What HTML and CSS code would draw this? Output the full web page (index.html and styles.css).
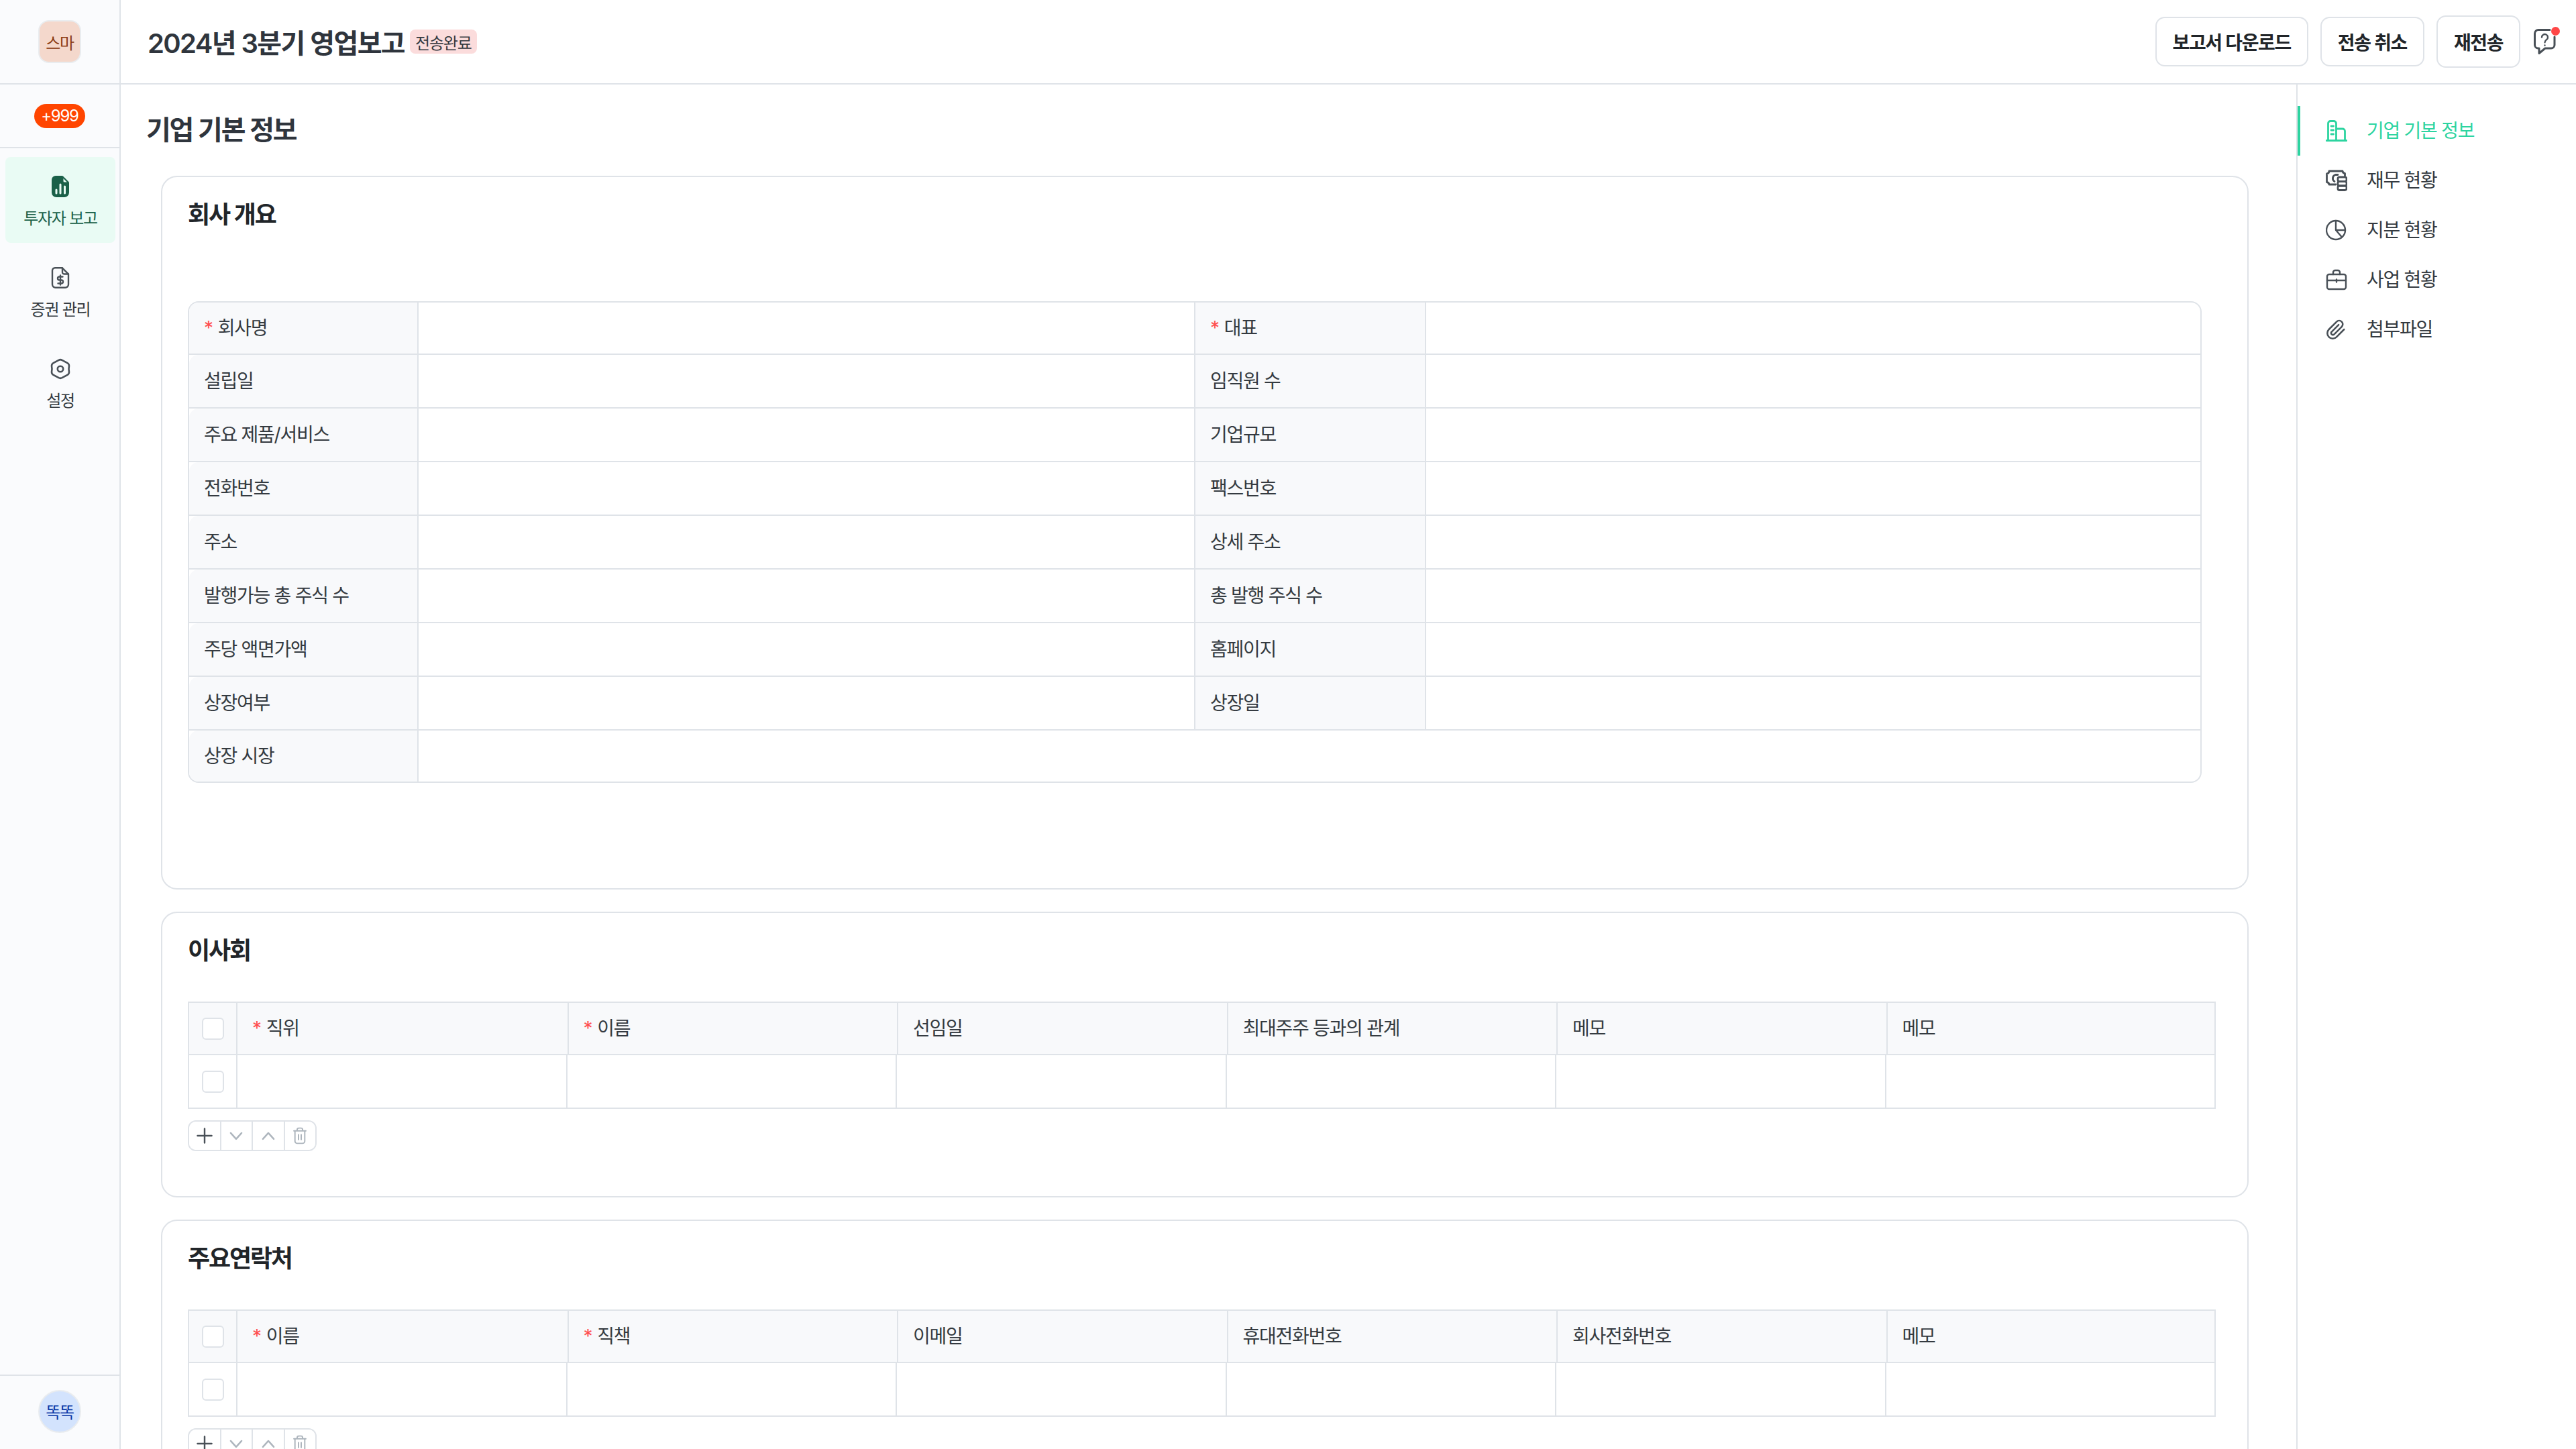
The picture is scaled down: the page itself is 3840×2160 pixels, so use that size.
FILE: index.html
```html
<!DOCTYPE html>
<html lang="ko">
<head>
    <meta charset="UTF-8">
    <meta name="viewport" content="width=device-width, initial-scale=1.0">
    <title>2024년 3분기 영업보고</title>
    <link rel="stylesheet" href="styles.css">
</head>
<body>

<aside class="sidebar">
    <div class="side-logo"><span class="company">스마</span></div>
    <div class="side-count"><span class="count">+999</span></div>
    <nav class="side-nav">
        <a class="side-item active">
            <svg class="icon" viewBox="0 0 32 32"><path fill="#1a6048" d="M9 0h9.500a2 2 0 0 1 1.400.6l8.500 8.500a2 2 0 0 1 .6 1.400V25a7 7 0 0 1-7 7H10a7 7 0 0 1-7-7V6a6 6 0 0 1 6-6z"/><path fill="#e9fbf4" d="M20.500 4v4a1.500 1.500 0 0 0 1.500 1.500h3.800z"/><path fill="none" stroke="#e9fbf4" stroke-width="3" stroke-linecap="round" d="M10 26v-5M16 26V13M22.500 26V16"/></svg>
            <span>투자자 보고</span>
        </a>
        <a class="side-item">
            <svg class="icon" viewBox="0 0 32 32" fill="none" stroke="#495057" stroke-width="2.400" stroke-linecap="round" stroke-linejoin="round"><path d="M8 1.200h10.500L28 10.700V26a4.800 4.800 0 0 1-4.800 4.800H8.800A4.800 4.800 0 0 1 4 26V5.200a4 4 0 0 1 4-4z"/><path d="M19 1.500V8a2.500 2.500 0 0 0 2.500 2.500H28"/><path d="M19.500 14.500h-5a2.500 2.500 0 0 0 0 5h3a2.500 2.500 0 0 1 0 5h-5M16 12.500v14"/></svg>
            <span>증권 관리</span>
        </a>
        <a class="side-item">
            <svg class="icon" viewBox="0 0 32 32" fill="none" stroke="#495057" stroke-width="2.600" stroke-linejoin="round"><path d="M13.500 2.800Q16 1.500 18.500 2.800L26.500 7.200Q29 8.500 29 11.500Q28 16 29 20.500Q29 23.500 26.500 24.800L18.500 29.200Q16 30.500 13.500 29.200L5.500 24.800Q3 23.500 3 20.500Q4 16 3 11.500Q3 8.500 5.500 7.200Z"/><circle cx="16" cy="16" r="4.200"/></svg>
            <span>설정</span>
        </a>
    </nav>
    <div class="side-foot"><span class="user">똑똑</span></div>
</aside>

<div class="page">
    <header class="topbar">
        <h1>2024년 3분기 영업보고</h1>
        <span class="tag">전송완료</span>
        <div class="actions">
            <button class="btn">보고서 다운로드</button>
            <button class="btn">전송 취소</button>
            <button class="btn btn-hover">재전송</button>
            <span class="help">
                <svg viewBox="0 0 38 40" fill="none" stroke="#495057" stroke-width="3" stroke-linejoin="round" stroke-linecap="round"><path d="M24 2.500H7A5.500 5.500 0 0 0 1.500 8v17a5 5 0 0 0 5 5H8v7.500l9-7.500h9a5 5 0 0 0 5-5V13"/><path stroke-width="2.400" d="M12 13.500a4.500 4.500 0 1 1 7.200 3.600c-1.700 1.200-2.700 2.200-2.700 4.200M16.500 25.500v.3"/></svg>
                <i class="dot"></i>
            </span>
        </div>
    </header>

    <div class="body">
        <main class="content">
            <h2 class="page-title">기업 기본 정보</h2>

            <section class="card card-info">
                <h3>회사 개요</h3>
                <table class="info">
                    <colgroup><col class="c-label"><col class="c-value"><col class="c-label2"><col></colgroup>
                    <tr><th><em>*</em>회사명</th><td></td><th><em>*</em>대표</th><td></td></tr>
                    <tr><th>설립일</th><td></td><th>임직원 수</th><td></td></tr>
                    <tr><th>주요 제품/서비스</th><td></td><th>기업규모</th><td></td></tr>
                    <tr><th>전화번호</th><td></td><th>팩스번호</th><td></td></tr>
                    <tr><th>주소</th><td></td><th>상세 주소</th><td></td></tr>
                    <tr><th>발행가능 총 주식 수</th><td></td><th>총 발행 주식 수</th><td></td></tr>
                    <tr><th>주당 액면가액</th><td></td><th>홈페이지</th><td></td></tr>
                    <tr><th>상장여부</th><td></td><th>상장일</th><td></td></tr>
                    <tr><th>상장 시장</th><td colspan="3"></td></tr>
                </table>
            </section>

            <section class="card">
                <h3>이사회</h3>
                <table class="grid">
                    <colgroup><col class="c-check"><col span="6"></colgroup>
                    <tr>
                        <th><span class="check"></span></th>
                        <th><em>*</em>직위</th>
                        <th><em>*</em>이름</th>
                        <th>선임일</th>
                        <th>최대주주 등과의 관계</th>
                        <th>메모</th>
                        <th>메모</th>
                    </tr>
                    <tr>
                        <td><span class="check"></span></td>
                        <td></td><td></td><td></td><td></td><td></td><td></td>
                    </tr>
                </table>
                <div class="tools">
                    <button><svg viewBox="0 0 32 32"><path stroke="#495057" stroke-width="3" stroke-linecap="round" d="M16 3v26M3 16h26"/></svg></button>
                    <button><svg viewBox="0 0 32 32"><path fill="none" stroke="#adb5bd" stroke-width="3" stroke-linecap="round" stroke-linejoin="round" d="M6 11l10 11 10-11"/></svg></button>
                    <button><svg viewBox="0 0 32 32"><path fill="none" stroke="#adb5bd" stroke-width="3" stroke-linecap="round" stroke-linejoin="round" d="M6 22l10-11 10 11"/></svg></button>
                    <button><svg viewBox="0 0 32 32" fill="none" stroke="#adb5bd" stroke-width="2.400" stroke-linecap="round" stroke-linejoin="round"><path d="M5 7h22M11 7V5a3 3 0 0 1 3-3h4a3 3 0 0 1 3 3v2M7 7v19a4 4 0 0 0 4 4h10a4 4 0 0 0 4-4V7M13.500 14v9M18.500 14v9"/></svg></button>
                </div>
            </section>

            <section class="card">
                <h3>주요연락처</h3>
                <table class="grid">
                    <colgroup><col class="c-check"><col span="6"></colgroup>
                    <tr>
                        <th><span class="check"></span></th>
                        <th><em>*</em>이름</th>
                        <th><em>*</em>직책</th>
                        <th>이메일</th>
                        <th>휴대전화번호</th>
                        <th>회사전화번호</th>
                        <th>메모</th>
                    </tr>
                    <tr>
                        <td><span class="check"></span></td>
                        <td></td><td></td><td></td><td></td><td></td><td></td>
                    </tr>
                </table>
                <div class="tools">
                    <button><svg viewBox="0 0 32 32"><path stroke="#495057" stroke-width="3" stroke-linecap="round" d="M16 3v26M3 16h26"/></svg></button>
                    <button><svg viewBox="0 0 32 32"><path fill="none" stroke="#adb5bd" stroke-width="3" stroke-linecap="round" stroke-linejoin="round" d="M6 11l10 11 10-11"/></svg></button>
                    <button><svg viewBox="0 0 32 32"><path fill="none" stroke="#adb5bd" stroke-width="3" stroke-linecap="round" stroke-linejoin="round" d="M6 22l10-11 10 11"/></svg></button>
                    <button><svg viewBox="0 0 32 32" fill="none" stroke="#adb5bd" stroke-width="2.400" stroke-linecap="round" stroke-linejoin="round"><path d="M5 7h22M11 7V5a3 3 0 0 1 3-3h4a3 3 0 0 1 3 3v2M7 7v19a4 4 0 0 0 4 4h10a4 4 0 0 0 4-4V7M13.500 14v9M18.500 14v9"/></svg></button>
                </div>
            </section>
        </main>

        <nav class="toc">
            <a class="toc-item active">
                <svg class="icon" viewBox="0 0 32 32" fill="none" stroke="#2dd4a0" stroke-width="2.800" stroke-linecap="round" stroke-linejoin="round"><path d="M3.500 30V5a3.500 3.500 0 0 1 3.500-3.500h5a3.500 3.500 0 0 1 3.500 3.500v25M15.500 13H25a3.500 3.500 0 0 1 3.500 3.500V30M1 30.500h30M8 9h3.500M8 15h3.500M8 21h3.500"/></svg>
                <span>기업 기본 정보</span>
            </a>
            <a class="toc-item">
                <svg class="icon" viewBox="0 0 32 32" fill="none" stroke="#495057" stroke-width="2.800" stroke-linecap="round" stroke-linejoin="round"><path d="M15 22H5a4 4 0 0 0-3.500-3.500V6A4 4 0 0 0 5 2h20a4 4 0 0 0 3.500 3.500V9"/><path d="M13 17.500a5.500 5.500 0 0 1 1.500-10H18"/><rect x="18" y="11" width="13" height="6.500" rx="2.500"/><rect x="18" y="17.500" width="13" height="6.500" rx="2.500"/><rect x="18" y="24" width="13" height="6.500" rx="2.500"/></svg>
                <span>재무 현황</span>
            </a>
            <a class="toc-item">
                <svg class="icon" viewBox="0 0 32 32" fill="none" stroke="#495057" stroke-width="2.400" stroke-linecap="round" stroke-linejoin="round"><circle cx="15" cy="16" r="14"/><path d="M15 2v14h14M15 16l9 10.500"/></svg>
                <span>지분 현황</span>
            </a>
            <a class="toc-item">
                <svg class="icon" viewBox="0 0 32 32" fill="none" stroke="#495057" stroke-width="2.400" stroke-linecap="round" stroke-linejoin="round"><rect x="2" y="8" width="28" height="22" rx="3"/><path d="M11 8V5a3 3 0 0 1 3-3h4a3 3 0 0 1 3 3v3M2 17h28M16 15.500v4"/></svg>
                <span>사업 현황</span>
            </a>
            <a class="toc-item">
                <svg class="icon" viewBox="0 0 24 24" fill="none" stroke="#495057" stroke-width="1.900" stroke-linecap="round" stroke-linejoin="round"><path d="M20.500 12 12 20.500a6 6 0 0 1-8.500-8.500l8.600-8.600a4 4 0 0 1 5.700 5.700l-8.600 8.600a2 2 0 0 1-2.800-2.800l8-8"/></svg>
                <span>첨부파일</span>
            </a>
        </nav>
    </div>
</div>

</body>
</html>
```

FILE: styles.css
```css
* {
    margin: 0;
    padding: 0;
    box-sizing: border-box;
}

body {
    display: flex;
    height: 100vh;
    overflow: hidden;
    font-family: Inter, "Noto Sans CJK KR", sans-serif;
    font-size: 28px;
    letter-spacing: -0.045em;
    color: #343a40;
    background-color: #fff;
}

.icon {
    width: 32px;
    height: 32px;
    flex-shrink: 0;
}

/* left sidebar */
.sidebar {
    width: 180px;
    flex-shrink: 0;
    display: flex;
    flex-direction: column;
    background-color: #fafbfd;
    border-right: 2px solid #dfe3e8;
}

.side-logo {
    height: 126px;
    display: flex;
    align-items: center;
    justify-content: center;
    border-bottom: 2px solid #dfe3e8;
}

.company {
    width: 64px;
    height: 64px;
    display: flex;
    align-items: center;
    justify-content: center;
    border: 2px solid #e9ecef;
    border-radius: 16px;
    font-size: 24px;
    color: #8a3a10;
    background-color: #f4d8cc;
}

.side-count {
    height: 95px;
    display: flex;
    align-items: center;
    justify-content: center;
    border-bottom: 2px solid #dfe3e8;
}

.count {
    width: 76px;
    height: 36px;
    display: flex;
    align-items: center;
    justify-content: center;
    border-radius: 18px;
    font-size: 24px;
    color: #fff;
    background-color: #ff4500;
}

.side-nav {
    display: flex;
    flex-direction: column;
    gap: 8px;
    padding: 13px 6px 0 8px;
}

.side-item {
    height: 128px;
    display: flex;
    flex-direction: column;
    align-items: center;
    padding-top: 28px;
    gap: 15px;
    border-radius: 8px;
    font-size: 24px;
    line-height: 34px;
    color: #343a40;
}

.side-item.active {
    color: #1a6048;
    background-color: #e9fbf4;
}

.side-foot {
    margin-top: auto;
    height: 111px;
    display: flex;
    align-items: center;
    justify-content: center;
    padding-bottom: 4px;
    border-top: 2px solid #dfe3e8;
}

.user {
    width: 64px;
    height: 64px;
    display: flex;
    align-items: center;
    justify-content: center;
    border: 2px solid #e9ecef;
    border-radius: 50%;
    font-size: 24px;
    color: #0b3aa8;
    background-color: #d3e3fd;
}

/* top bar */
.page {
    flex: 1;
    min-width: 0;
    display: flex;
    flex-direction: column;
}

.topbar {
    height: 126px;
    flex-shrink: 0;
    display: flex;
    align-items: center;
    padding-left: 40px;
    border-bottom: 2px solid #dfe3e8;
}

.topbar h1 {
    font-size: 40px;
    font-weight: 600;
    letter-spacing: -0.04em;
    color: #2f353d;
}

.tag {
    margin-left: 8px;
    height: 36px;
    padding: 0 8px;
    display: flex;
    align-items: center;
    border-radius: 8px;
    font-size: 24px;
    letter-spacing: -0.05em;
    background-color: #fbdcdc;
}

.actions {
    margin-left: auto;
    display: flex;
    align-items: center;
    gap: 18px;
    padding-right: 25px;
}

.btn {
    height: 74px;
    padding: 0 24px;
    border: 2px solid #dfe3e8;
    border-radius: 14px;
    font-family: inherit;
    font-size: 28px;
    font-weight: 600;
    letter-spacing: -0.05em;
    color: #212529;
    background-color: #fff;
}

.btn-hover {
    height: 78px;
}

.help {
    position: relative;
    width: 38px;
    height: 40px;
    margin-left: 2px;
}

.help svg {
    width: 38px;
    height: 40px;
}

.dot {
    position: absolute;
    top: -2px;
    right: -1px;
    width: 13px;
    height: 13px;
    border-radius: 50%;
    background-color: #ff4747;
}

/* main content */
.body {
    flex: 1;
    min-height: 0;
    display: flex;
}

.content {
    flex: 1;
    min-width: 0;
    padding: 0 71px 0 60px;
}

.page-title {
    height: 136px;
    margin-left: -22px;
    padding-top: 40px;
    font-size: 40px;
    line-height: 56px;
    font-weight: 600;
    letter-spacing: -0.055em;
    color: #2f353d;
}

.card {
    padding: 32px 47px 0 38px;
    height: 426px;
    margin-bottom: 33px;
    border: 2px solid #dfe3e8;
    border-radius: 24px;
}

.card-info {
    height: 1064px;
    padding-right: 68px;
}

.card h3 {
    height: 50px;
    font-size: 36px;
    line-height: 48px;
    font-weight: 600;
    letter-spacing: -0.06em;
    color: #212529;
}

em {
    margin-right: 8px;
    font-style: normal;
    color: #ff4d4f;
}

/* company table */
.info {
    width: 100%;
    margin-top: 103px;
    table-layout: fixed;
    border-spacing: 0;
    border: 2px solid #dfe3e8;
    border-radius: 16px;
}

.c-label {
    width: 342px;
}

.c-value {
    width: 1158px;
}

.c-label2 {
    width: 344px;
}

.info th,
.info td {
    height: 80px;
    border-right: 2px solid #dfe3e8;
    border-bottom: 2px solid #dfe3e8;
}

.info tr:first-child th,
.info tr:first-child td {
    height: 78px;
}

.info tr:last-child th,
.info tr:last-child td {
    height: 76px;
    border-bottom: none;
}

.info th:first-child {
    border-top-left-radius: 14px;
}

.info tr:last-child th:first-child {
    border-bottom-left-radius: 14px;
}

.info td:last-child {
    border-right: none;
}

th {
    padding: 0 0 5px 22px;
    text-align: left;
    font-weight: 400;
    color: #343a40;
    background-color: #f8f9fb;
}

/* list tables: header lines sit just right of the body lines */
.grid {
    width: 100%;
    margin-top: 50px;
    table-layout: fixed;
    border-spacing: 0;
    border-top: 2px solid #dfe3e8;
    border-left: 2px solid #dfe3e8;
}

.c-check {
    width: 72px;
}

.grid th,
.grid td {
    height: 80px;
    border-bottom: 2px solid #dfe3e8;
}

.grid td,
.grid th:first-child,
.grid th:last-child {
    border-right: 2px solid #dfe3e8;
}

.grid th {
    height: 78px;
    border-left: 2px solid #dfe3e8;
}

.grid th:first-child,
.grid th:nth-child(2) {
    border-left: none;
}

.grid th:first-child,
.grid td:first-child {
    padding: 0 0 0 19px;
}

.check {
    display: block;
    width: 33px;
    height: 33px;
    border: 2px solid #dfe3e8;
    border-radius: 6px;
    background-color: #fff;
}

.tools {
    width: 192px;
    height: 46px;
    margin-top: 17px;
    display: flex;
    border: 2px solid #dfe3e8;
    border-radius: 12px;
    overflow: hidden;
}

.tools button {
    flex: 1;
    display: flex;
    align-items: center;
    justify-content: center;
    border: none;
    border-right: 2px solid #dfe3e8;
    background-color: #fff;
}

.tools button:last-child {
    border-right: none;
}

.tools svg {
    width: 26px;
    height: 26px;
}

/* right side navigation */
.toc {
    width: 417px;
    flex-shrink: 0;
    padding-top: 32px;
    border-left: 2px solid #dfe3e8;
}

.toc-item {
    height: 74px;
    display: flex;
    align-items: center;
    gap: 29px;
    padding-left: 42px;
}

.toc-item span {
    padding-bottom: 4px;
}

.toc-item.active {
    color: #2dd4a0;
    border-left: 4px solid #2dd4a0;
    padding-left: 38px;
}
```
